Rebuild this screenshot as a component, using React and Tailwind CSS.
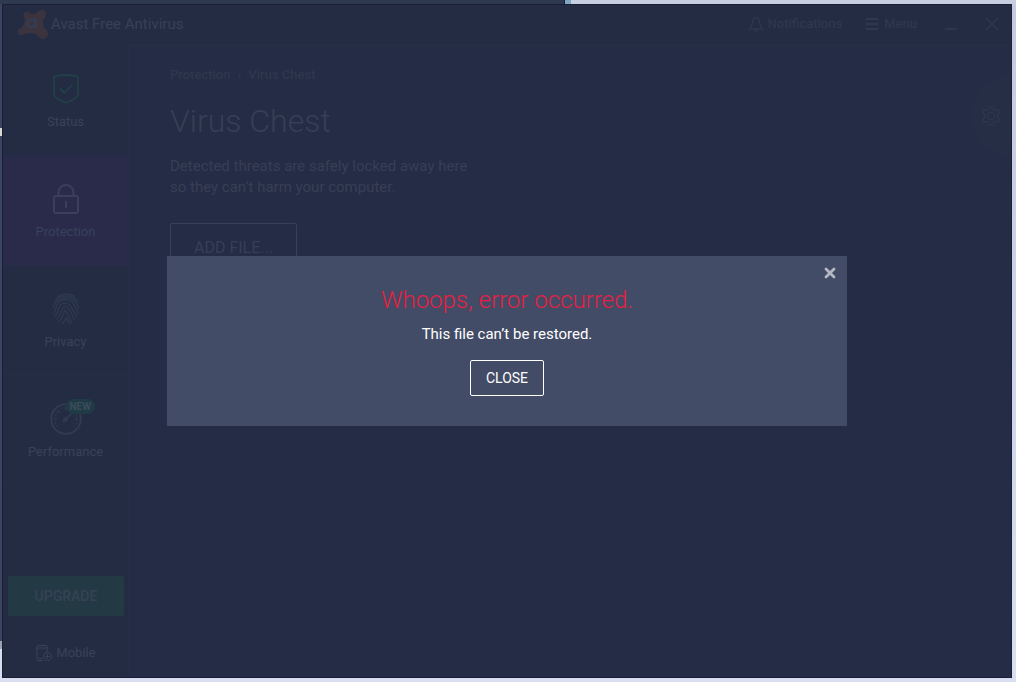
import React from "react";

const stroke = { fill: "none", stroke: "currentColor", strokeLinecap: "round", strokeLinejoin: "round" };

function AvastLogo() {
  return (
    <svg className="h-8 w-8 text-[#3b343e]" viewBox="0 0 32 32" aria-hidden="true">
      <path
        fill="currentColor"
        d="M20.500 3.800A4.600 4.600 0 1 1 28.300 8.700C25.500 12 25 17 28.500 21.300A5.200 5.200 0 1 1 21.300 28.300C18 24.500 12.500 24.500 7.500 25.800A3.700 3.700 0 1 1 3.200 20.200C7 17.500 8.500 13.500 7.500 9.500A3.100 3.100 0 0 1 12 4.800C15 6.800 18 6.500 20.500 3.800z"
      />
      <circle cx="14.500" cy="15.500" r="4" fill="none" stroke="#333d57" strokeWidth="2" />
      <path d="M18.700 10.500V20.500" stroke="#333d57" strokeWidth="2" />
    </svg>
  );
}

function ShieldIcon() {
  return (
    <svg className="h-8 w-8 text-[#214047]" viewBox="0 0 32 32" aria-hidden="true" {...stroke} strokeWidth="1.800">
      <path d="M4 4C8 1.300 24 1.300 28 4V21.500c0 2.500-6.500 6-12 8.500C10.500 27.500 4 24 4 21.500z" />
      <path d="M10.500 16l4 4 7.500-8" />
    </svg>
  );
}

function LockIcon() {
  return (
    <svg className="h-8 w-8 text-[#3b3f5b]" viewBox="0 0 32 32" aria-hidden="true" {...stroke} strokeWidth="2">
      <rect x="4" y="13" width="24" height="17" rx="2" />
      <path d="M8.500 13V9.500a7.500 7.500 0 0 1 15 0V13M16 19v5" />
    </svg>
  );
}

function FingerprintIcon() {
  return (
    <svg className="h-8 w-8 text-[#2d384f]" viewBox="0 0 32 32" aria-hidden="true" {...stroke} strokeWidth="1.500">
      <path d="M7.500 3.500C12.500.300 19.500.300 24.500 3.500M4.500 8.500C9.500 1 22.500 1 27.500 8.500" />
      <path d="M3.500 14.500C5 3.500 22 1.500 27 11c1 2 1.500 3.500 1.500 5M3.500 19.500c3-2 2-5 3.500-8C10.500 4.500 20.500 5.500 24.500 12.500c2 3.500 3 6 3.500 8" />
      <path d="M4.500 23c4-3 3.500-6 4.700-9 2.300-5.500 9.300-4.500 12.300.5 2 3.500 3.500 6 5 9.500" />
      <path d="M6.500 26c5-4 4.500-8 5.800-10.500 1.500-2.500 5.200-2 6.700.5 2 3.500 3.500 7 5.500 11" />
      <path d="M9 28.500c4.500-4 4.500-7.500 6-11.500 2 2 3.500 6 6.500 12.500M12 30.500c2-1.500 3.500-3.500 4.300-6 1 2.500 1.700 4 3.200 6" />
    </svg>
  );
}

function GaugeIcon() {
  return (
    <svg className="h-8 w-8 text-[#303a52]" viewBox="0 0 32 32" aria-hidden="true" {...stroke}>
      <circle cx="16" cy="16" r="14.800" strokeWidth="2" />
      <path d="M8 24A11.500 11.500 0 0 1 20 5.300M26.500 12A11.500 11.500 0 0 1 24 24" strokeWidth="1" strokeDasharray="2 2" />
      <path d="M4.800 16h2.500M24.700 16h2.500M8 8l1.500 1.500M16 4.800v2" strokeWidth="1.200" />
      <path d="M13.500 18.500L24 8" strokeWidth="1.500" />
      <circle cx="15.500" cy="16.500" r="2.300" fill="currentColor" stroke="none" />
    </svg>
  );
}

function BellIcon() {
  return (
    <svg className="h-4 w-4" viewBox="0 0 16 16" aria-hidden="true" {...stroke} strokeWidth="1.300">
      <path d="M1.500 13h13c-2.300-2-2.500-3.500-2.800-6C11.400 3.500 10 1.500 8 1.500S4.600 3.500 4.300 7c-.3 2.500-.5 4-2.800 6z" />
      <path d="M6.800 14.500c.5 1 1.900 1 2.400 0" />
    </svg>
  );
}

function MenuIcon() {
  return (
    <svg className="h-3 w-3" viewBox="0 0 12 12" aria-hidden="true">
      <path d="M0 1h12M0 6h12M0 11h12" stroke="currentColor" strokeWidth="2" />
    </svg>
  );
}

function GearIcon() {
  return (
    <svg className="h-5 w-5" viewBox="0 0 20 20" aria-hidden="true" {...stroke} strokeWidth="1.300">
      <path d="M8.300 1h3.400l.6 2.500 1.800 1 2.500-.8 1.800 3-1.900 1.800v3l1.900 1.800-1.800 3-2.500-.8-1.800 1-.6 2.500H8.300l-.6-2.500-1.800-1-2.500.8-1.800-3 1.900-1.800v-3L1.600 6.700l1.800-3 2.500.8 1.800-1z" />
      <circle cx="10" cy="10" r="3.600" />
    </svg>
  );
}

function MobileIcon() {
  return (
    <svg className="h-4 w-4" viewBox="0 0 16 16" aria-hidden="true" {...stroke} strokeWidth="1">
      <path d="M6.500 15.500H2a1 1 0 0 1-1-1v-13a1 1 0 0 1 1-1h8a1 1 0 0 1 1 1v5M1 3h10M3 13.500h3" />
      <circle cx="11.500" cy="11.500" r="4" />
      <path d="M11.500 9.500v4M9.500 11.500h4" />
    </svg>
  );
}

const items = [
  { label: "Status", Icon: ShieldIcon },
  { label: "Protection", Icon: LockIcon, active: true },
  { label: "Privacy", Icon: FingerprintIcon },
  { label: "Performance", Icon: GaugeIcon, badge: "NEW" },
];

function Header() {
  return (
    <header className="flex h-10 items-center pr-3 pb-0.5 pl-3.5 text-[#2e374e]">
      <div className="flex items-center gap-0.5">
        <AvastLogo />
        <span className="text-[15px] leading-5 text-[#374059]">Avast Free Antivirus</span>
      </div>
      <div className="ml-auto flex items-center text-[13px] font-medium">
        <button type="button" className="mr-6 flex items-center gap-1">
          <BellIcon />
          Notifications
        </button>
        <button type="button" className="mr-7 flex items-center gap-1.5">
          <MenuIcon />
          Menu
        </button>
        <button type="button" aria-label="Minimize" className="mr-7 flex h-3 items-end">
          <span className="h-0.5 w-3 bg-current" />
        </button>
        <button type="button" aria-label="Close window">
          <svg className="h-3.5 w-3.5" viewBox="0 0 14 14" aria-hidden="true">
            <path d="M.5.500l13 13M13.500.500l-13 13" stroke="currentColor" strokeWidth="1.500" />
          </svg>
        </button>
      </div>
    </header>
  );
}

function Sidebar() {
  return (
    <aside className="flex w-[126px] shrink-0 flex-col border-r border-[#272f47]">
      <nav className="pt-px">
        {items.map(({ label, Icon, active, badge }) => (
          <a
            key={label}
            href="#"
            className={
              "flex h-[110px] flex-col items-center border-b border-[#262e46] pt-[27px] text-[13px] text-[#384259] " +
              (active ? "bg-[#2a2b4b]" : "")
            }
          >
            <span className="relative">
              <Icon />
              {badge && (
                <span className="absolute -top-1 left-4 rounded-full bg-[#213b46] px-1 text-[10px] leading-[15px] font-bold text-[#394d5b]">
                  {badge}
                </span>
              )}
            </span>
            <span className="mt-[7px] leading-5">{label}</span>
          </a>
        ))}
      </nav>
      <div className="mt-auto flex flex-col pr-1 pb-[15px] pl-[5px]">
        <button type="button" className="h-10 rounded-xs bg-[#233944] text-sm font-medium text-[#364254]">
          UPGRADE
        </button>
        <a href="#" className="mt-7 flex items-center justify-center gap-1 text-[13px] leading-[18px] text-[#384259]">
          <MobileIcon />
          Mobile
        </a>
      </div>
    </aside>
  );
}

function ErrorDialog() {
  return (
    <div className="absolute inset-0 flex items-center justify-center">
      <div
        role="alertdialog"
        aria-labelledby="error-title"
        aria-describedby="error-text"
        className="relative flex w-[680px] max-w-full flex-col items-center bg-[#434c66] px-6 pt-7 pb-[30px] text-white"
      >
        <button type="button" aria-label="Dismiss" className="absolute top-[11px] right-[11px] text-[#b4b8c3]">
          <svg className="h-3 w-3" viewBox="0 0 12 12" aria-hidden="true">
            <path d="M2 2l8 8M10 2l-8 8" stroke="currentColor" strokeWidth="2.800" strokeLinecap="round" />
          </svg>
        </button>
        <h2 id="error-title" className="text-2xl leading-8 font-light text-[#e81e42]">
          Whoops, error occurred.
        </h2>
        <p id="error-text" className="mt-2 text-[15px] leading-5">
          This file can’t be restored.
        </p>
        <button type="button" className="mt-4 h-9 rounded-xs border border-white px-[15px] text-sm">
          CLOSE
        </button>
      </div>
    </div>
  );
}

export default function App() {
  return (
    <div className="relative flex min-h-screen flex-col bg-[#d5dfef] pt-1 pr-1 pb-1 pl-0.5 font-['Roboto',sans-serif]">
      <div className="absolute inset-0 flex flex-col overflow-hidden" aria-hidden="true">
        <div className="flex h-1">
          <div className="w-[565px] border-r border-[#1b1e36] bg-[#2e394f]" />
          <div className="w-1.5 bg-[#7fa6c4]" />
          <div className="grow bg-[#c5cfe0]" />
        </div>
        <div className="flex grow justify-between">
          <div className="flex w-0.5 flex-col">
            <div className="h-[124px] bg-[#3a4562]" />
            <div className="h-2 bg-[#d8d9d2]" />
            <div className="h-[505px] bg-[#3a4562]" />
            <div className="h-2 bg-[#9ba3b0]" />
          </div>
          <div className="w-1 bg-linear-to-b from-[#c2cbe0] to-[#d5e0f0]" />
        </div>
        <div className="h-1 bg-[#d9def0]" />
      </div>
      <div className="relative flex grow flex-col overflow-hidden border border-[#1b1e36] bg-[#242c44]">
        <Header />
        <div className="flex grow">
          <Sidebar />
          <main className="relative grow border-t border-[#272f47] bg-[#252c45] px-[41px] pt-5 text-[#373f56]">
            <nav className="flex gap-[7px] text-[13px] leading-[18px] font-medium text-[#2f374e]" aria-label="Breadcrumb">
              <a href="#">Protection</a>
              <span>›</span>
              <a href="#">Virus Chest</a>
            </nav>
            <h1 className="mt-[17px] text-[32px] leading-10 font-light">Virus Chest</h1>
            <p className="mt-[15px] text-[15px] leading-[21px]">
              Detected threats are safely locked away here
              <br />
              so they can’t harm your computer.
            </p>
            <button type="button" className="mt-[25px] h-[50px] rounded-xs border border-[#384157] px-[23px] text-base">
              ADD FILE...
            </button>
            <button
              type="button"
              aria-label="Settings"
              className="absolute top-7 -right-11 flex h-[84px] w-[84px] items-center rounded-full bg-[#262e46] pl-2.5 text-[#2e364d]"
            >
              <GearIcon />
            </button>
          </main>
        </div>
        <ErrorDialog />
      </div>
    </div>
  );
}
